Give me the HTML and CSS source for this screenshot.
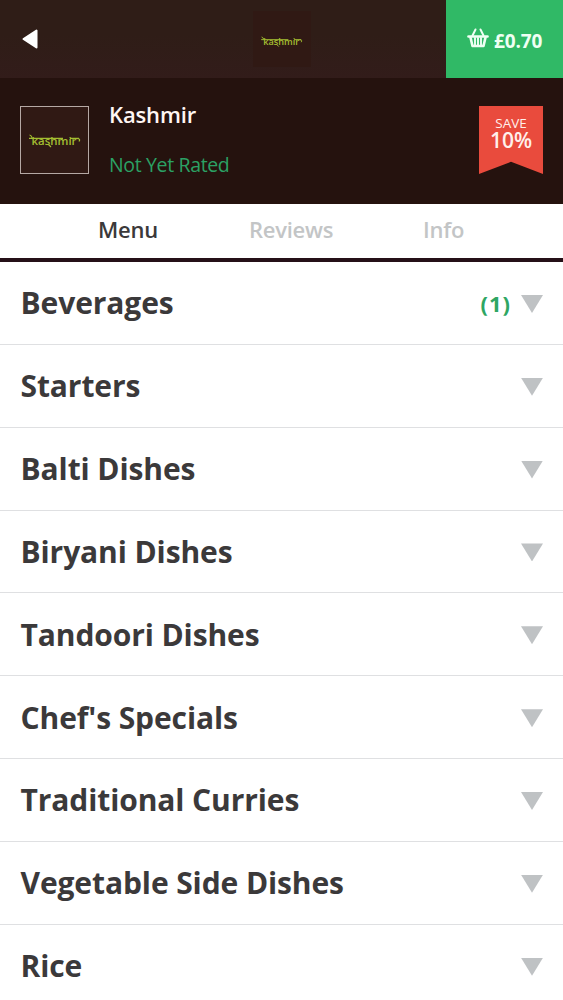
FILE: index.html
```html
<!DOCTYPE html>
<html lang="en">
<head>
<meta charset="utf-8">
<title>Kashmir</title>
<link rel="stylesheet" href="styles.css">
</head>
<body>
<header class="topbar">
  <svg class="back" width="16" height="20" viewBox="0 0 16 20"><path d="M1.500 10 14.500 1.500V18.500z" fill="#fff" stroke="#fff" stroke-width="2" stroke-linejoin="round"/></svg>
  <div class="brand">
    <svg width="44" height="16" viewBox="0 0 54 20"><use href="#logo"/></svg>
  </div>
  <div class="basket">
    <svg width="22" height="20" viewBox="0 0 22 20" fill="none" stroke="#effff3" stroke-linecap="round" stroke-linejoin="round"><path d="M5.500 7.500 8.500 1.500M16.500 7.500 13.500 1.500" stroke-width="2"/><path d="M1.500 8.500H20.500" stroke-width="2.600"/><path d="M3.500 9.500 5.500 18H16.500L18.500 9.500" stroke-width="2.600"/><path d="M8 10V17M11 10V17M14 10V17" stroke-width="1.900"/></svg>
    <span class="total">£0.70</span>
  </div>
</header>
<section class="restaurant">
  <div class="thumb">
    <svg width="54" height="20" viewBox="0 0 54 20">
      <g id="logo">
        <text class="logo-text" x="3.500" y="14.500" textLength="45" lengthAdjust="spacingAndGlyphs">kashmir</text>
        <path d="M1 8.300H35M42 8.300H51M1.500 5Q3 5 4 7.500M49 8.500Q53 8.500 51 11.500M20.500 14.500 23 17" fill="none" stroke="#a3bd31" stroke-width="1.200"/>
      </g>
    </svg>
  </div>
  <div class="details">
    <div class="name">Kashmir</div>
    <div class="rating">Not Yet Rated</div>
  </div>
  <div class="ribbon"><span class="save">SAVE</span><span class="percent">10%</span></div>
</section>
<nav class="tabs">
  <span class="tab active">Menu</span><span class="tab reviews">Reviews</span><span class="tab">Info</span>
</nav>
<main class="menu">
  <div class="row"><span class="title">Beverages</span><span class="count">(1)</span><i class="arrow"></i></div>
  <div class="row"><span class="title">Starters</span><i class="arrow"></i></div>
  <div class="row"><span class="title">Balti Dishes</span><i class="arrow"></i></div>
  <div class="row"><span class="title">Biryani Dishes</span><i class="arrow"></i></div>
  <div class="row"><span class="title">Tandoori Dishes</span><i class="arrow"></i></div>
  <div class="row"><span class="title">Chef's Specials</span><i class="arrow"></i></div>
  <div class="row"><span class="title">Traditional Curries</span><i class="arrow"></i></div>
  <div class="row"><span class="title">Vegetable Side Dishes</span><i class="arrow"></i></div>
  <div class="row"><span class="title">Rice</span><i class="arrow"></i></div>
</main>
</body>
</html>
```
FILE: styles.css
```css
* { box-sizing: border-box; }
body {
  margin: 0;
  height: 1000px;
  overflow: hidden;
  background: #fff;
  color: #3b393a;
  font-family: "Open Sans", "Noto Sans", sans-serif;
}
svg { display: block; }
.topbar {
  display: grid;
  grid-template-columns: 1fr 58px 1fr;
  align-items: center;
  height: 78px;
  background: linear-gradient(#2f1d17 45%, #321c1a);
}
.back { margin-left: 22px; }
.brand {
  display: flex;
  align-items: center;
  justify-content: center;
  height: 56px;
  padding-top: 4px;
  background: #301914;
}
.basket {
  justify-self: end;
  display: flex;
  align-items: center;
  gap: 5px;
  width: 117px;
  height: 78px;
  padding-left: 21px;
  background: #30b966;
  color: #effff3;
}
.basket svg { margin-bottom: 3px; }
.total { font-size: 19px; font-weight: 700; letter-spacing: -0.100px; line-height: 26px; margin-top: 3px; }
.logo-text { font-size: 11.500px; font-weight: 600; fill: #a3bd31; }
.restaurant {
  display: flex;
  height: 126px;
  padding: 28px 20px 0;
  background: #25120e;
}
.thumb {
  display: flex;
  align-items: center;
  justify-content: center;
  width: 69px;
  height: 68px;
  border: 1.500px solid #b5a8a4;
  background: #301914;
}
.details { flex: 1; padding-left: 20px; }
.name {
  margin-top: -7px;
  color: #fff6f3;
  font-size: 22px;
  font-weight: 600;
  letter-spacing: -0.150px;
  line-height: 30px;
}
.rating { margin-top: 22px; color: #2ba164; font-size: 19.500px; letter-spacing: -0.350px; line-height: 28px; }
.ribbon {
  display: flex;
  flex-direction: column;
  align-items: center;
  width: 64px;
  height: 68px;
  padding-top: 9px;
  background: #e94b3d;
  color: #fff0eb;
  clip-path: polygon(0 0, 100% 0, 100% 100%, 50% 82%, 0 100%);
}
.save { font-size: 13.500px; font-weight: 400; line-height: 17px; }
.percent { font-size: 21px; font-weight: 600; line-height: 17px; }
.tabs {
  display: flex;
  height: 58px;
  padding-left: 98px;
  border-bottom: 4px solid #251018;
  color: #c3c5c6;
  font-size: 22px;
  font-weight: 600;
  letter-spacing: -0.250px;
  line-height: 51px;
}
.reviews { margin: 0 90px 0 91px; }
.active { color: #3b393a; }
.row {
  display: flex;
  align-items: center;
  height: 82.850px;
  padding: 1px 20px 0 20.500px;
  border-bottom: 1px solid #dfe0e2;
}
.title { flex: 1; font-size: 30px; font-weight: 700; letter-spacing: -0.100px; line-height: 40px; }
.count {
  margin-right: 10px;
  color: #2ea663;
  font-size: 22px;
  font-weight: 700;
  letter-spacing: 1px;
  margin-top: -1px;
}
.arrow {
  width: 22px;
  height: 18px;
  margin-top: 1px;
  background: #bfc2c4;
  clip-path: polygon(0 0, 100% 0, 50% 100%);
}
```
